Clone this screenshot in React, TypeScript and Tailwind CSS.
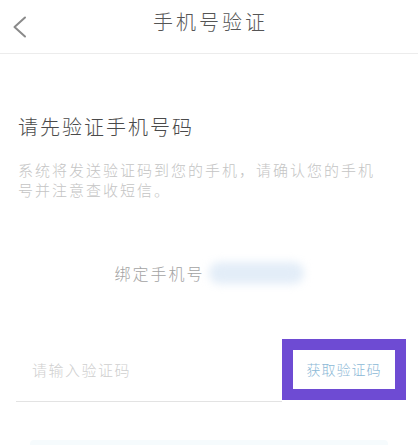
import React from "react";

export default function App() {
  const font = { fontFamily: '"Noto Sans CJK SC", "Noto Sans", sans-serif' };
  return (
    <div className="w-[418px] h-[445px] bg-white overflow-hidden" style={font}>
      <div className="h-[54px] grid grid-cols-[1fr_auto_1fr] items-center border-b border-[#ececec]">
        <div className="pl-[12px] flex items-center">
          <svg width="16" height="22" viewBox="0 0 16 22" fill="none">
            <polyline points="13,1.5 2.5,11 13,20.5" stroke="#8a8a8a" strokeWidth="2" strokeLinecap="round" strokeLinejoin="round" />
          </svg>
        </div>
        <div className="text-[20px] leading-[28px] tracking-[3px] text-[#555555] font-light -mt-[9px] pl-[3px]">手机号验证</div>
        <div />
      </div>
      <div className="mt-[59px] pl-[18px] text-[20px] leading-[28px] tracking-[2px] text-[#4a4a4a] font-light">请先验证手机号码</div>
      <div className="mt-[19px] pl-[18px] pr-[38px] text-[15px] leading-[20px] tracking-[2px] text-[#c4c4c4] font-light">
        系统将发送验证码到您的手机，请确认您的手机号并注意查收短信。
      </div>
      <div className="mt-[61px] flex justify-center items-center">
        <span className="text-[16px] leading-[24px] tracking-[2px] text-[#a3a3a3] font-light">绑定手机号</span>
        <span className="ml-[4px] w-[95px] h-[22px] rounded-full bg-[#e3edf8] blur-[4px]" />
      </div>
      <div className="mt-[54px] flex items-start pl-[16px] pr-[12px]">
        <div className="flex-1 h-[63px] border-b border-[#e3e3e3] flex items-center pl-[16px] text-[15px] tracking-[1.5px] text-[#cfcfcf] font-light">
          请输入验证码
        </div>
        <div className="w-[124px] h-[61px] border-[11px] border-[#6e4bd3] bg-white flex items-center justify-center text-[14px] tracking-[1px] text-[#8cb8d6] font-light">
          获取验证码
        </div>
      </div>
      <div className="mt-[38px] mx-[30px] h-[44px] rounded-[4px] bg-[#f6fbfd]" />
    </div>
  );
}
